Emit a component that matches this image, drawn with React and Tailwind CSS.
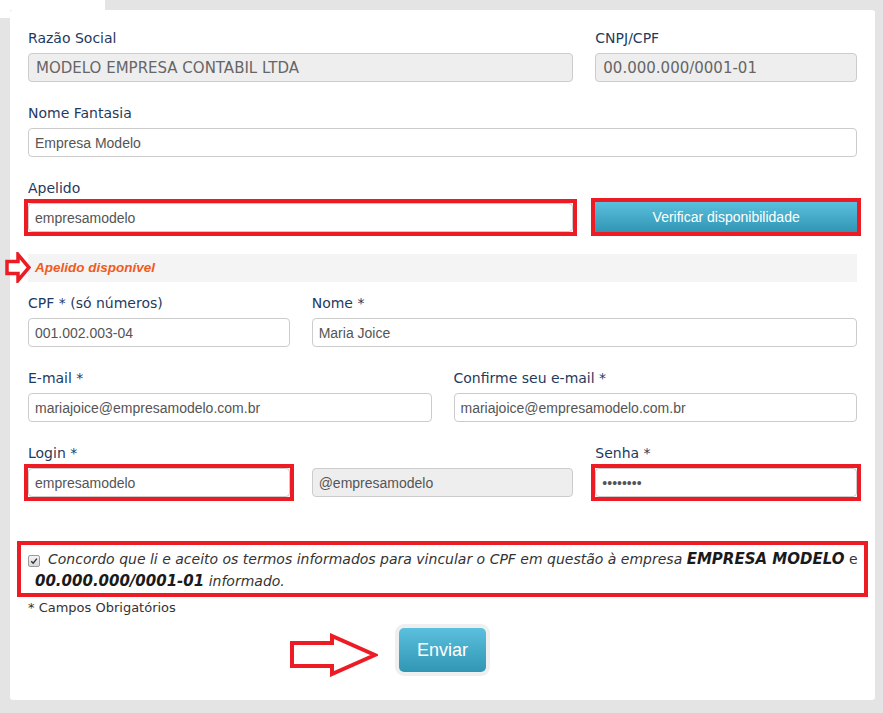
import React from 'react';

const LabelStyle = "block h-[20px] leading-[20px] mb-[5px] text-[14px] text-[#1f3a5f]";
const InputStyle = "block w-full h-[29px] border border-[#cccccc] rounded-[4px] px-[6px] text-[14px] text-[#555555] font-['Liberation_Sans',Arial,sans-serif] bg-white focus:outline-none";
const DisabledStyle = "block w-full h-[29px] border border-[#cccccc] rounded-[4px] px-[7px] text-[15px] text-[#666666] bg-[#eeeeee]";
// red annotation box, square corners
const Highlight = "outline-4 outline-[#ed1c24] outline-offset-0";

const Field = ({ label, value, disabled, highlight, className = '' }) => (
    <div className={className}>
        <label className={LabelStyle}>{label}</label>
        {disabled ? (
            <input readOnly value={value} className={DisabledStyle} />
        ) : (
            <div className={highlight ? Highlight : ''}>
                <input readOnly value={value} className={InputStyle} />
            </div>
        )}
    </div>
);

const HollowArrow = ({ className, viewBox, points, stroke }) => (
    <svg className={className} viewBox={viewBox} fill="white">
        <polygon points={points} stroke="#ed1c24" strokeWidth={stroke} strokeLinejoin="miter" />
    </svg>
);

export default function App() {
    return (
        <div className="min-h-[713px] bg-[#e4e4e4] font-['DejaVu_Sans',Verdana,sans-serif]">
            <div className="flex h-[10px]">
                <div className="w-[105px] bg-white" />
            </div>
            <div className="flex pr-[8px]">
                <div className="w-[10px] shrink-0">
                    <div className="h-[8px] bg-white" />
                </div>
                <div className="flex-1 bg-white rounded-[3px] px-[18px] pt-[18px] pb-[28px]">

                    <div className="grid grid-cols-12 gap-x-[22px]">
                        <Field className="col-span-8" label="Razão Social" value="MODELO EMPRESA CONTABIL LTDA" disabled />
                        <Field className="col-span-4" label="CNPJ/CPF" value="00.000.000/0001-01" disabled />
                    </div>

                    <div className="grid grid-cols-12 gap-x-[22px] mt-[21px]">
                        <Field className="col-span-12" label="Nome Fantasia" value="Empresa Modelo" />
                    </div>

                    <div className="grid grid-cols-12 gap-x-[22px] mt-[21px]">
                        <Field className="col-span-8" label="Apelido" value="empresamodelo" highlight />
                        <div className="col-span-4 pt-[24px]">
                            <div className={Highlight}>
                                <button
                                    type="button"
                                    className="block w-full h-[30px] bg-linear-to-b from-[#5bc0de] to-[#2f96b4] text-white text-[14px] font-['Liberation_Sans',Arial,sans-serif]"
                                >
                                    Verificar disponibilidade
                                </button>
                            </div>
                        </div>
                    </div>

                    <div className="relative mt-[22px] h-[28px] bg-[#f4f4f4] pl-[7px] flex items-center">
                        <HollowArrow
                            className="absolute left-[-23px] top-[-2px] w-[26px] h-[31px]"
                            viewBox="0 0 26 31"
                            points="2,9.5 13,9.5 13,2.5 24,15.5 13,28.5 13,21.5 2,21.5"
                            stroke={3.5}
                        />
                        <span className="text-[13.5px] font-bold italic text-[#f15a22] font-['Liberation_Sans',Arial,sans-serif]">
                            Apelido disponível
                        </span>
                    </div>

                    <div className="grid grid-cols-12 gap-x-[22px] mt-[11px]">
                        <Field className="col-span-4" label="CPF * (só números)" value="001.002.003-04" />
                        <Field className="col-span-8" label="Nome *" value="Maria Joice" />
                    </div>

                    <div className="grid grid-cols-12 gap-x-[22px] mt-[21px]">
                        <Field className="col-span-6" label="E-mail *" value="mariajoice@empresamodelo.com.br" />
                        <Field className="col-span-6" label="Confirme seu e-mail *" value="mariajoice@empresamodelo.com.br" />
                    </div>

                    <div className="grid grid-cols-12 gap-x-[22px] mt-[21px]">
                        <Field className="col-span-4" label="Login *" value="empresamodelo" highlight />
                        <div className="col-span-4 pt-[25px]">
                            <input readOnly value="@empresamodelo" className={`${InputStyle} bg-[#eeeeee]!`} />
                        </div>
                        <Field className="col-span-4" label="Senha *" value="••••••••" highlight />
                    </div>

                    <div className="mt-[44px] -mx-[11px] border-4 border-[#ed1c24] pl-[14px] pt-[3px] pb-[1px] text-[14px] leading-[22px] italic text-[#333333]">
                        <div className="whitespace-nowrap">
                            <span className="inline-flex items-center justify-center w-[12px] h-[12px] ml-[-7px] mr-[8px] align-[-1px] rounded-[2px] border border-[#9a9a9a] bg-linear-to-b from-[#f4f4f4] to-[#d8d8d8]">
                                <svg viewBox="0 0 10 10" className="w-[8px] h-[8px]">
                                    <path d="M1.5 5.2 L4 7.8 L8.6 2" fill="none" stroke="#333" strokeWidth="1.8" />
                                </svg>
                            </span>
                            Concordo que li e aceito os termos informados para vincular o CPF em questão à empresa{' '}
                            <b className="text-[15px] text-[#1a1a1a]">EMPRESA MODELO</b> <span className="not-italic">e</span>
                        </div>
                        <div className="whitespace-nowrap">
                            <b className="text-[15px] text-[#1a1a1a]">00.000.000/0001-01</b> informado.
                        </div>
                    </div>

                    <p className="mt-[1px] h-[20px] leading-[20px] text-[13px] text-[#333333]">* Campos Obrigatórios</p>

                    <div className="mt-[10px] flex justify-center">
                        <div className="relative">
                            <HollowArrow
                                className="absolute right-full mr-[21px] top-[5px] w-[88px] h-[44px]"
                                viewBox="0 0 88 44"
                                points="2,10 42,10 42,3 85,22 42,41 42,33 2,33"
                                stroke={4}
                            />
                            <button
                                type="button"
                                className="w-[87px] h-[44px] rounded-[5px] bg-linear-to-b from-[#5bc0de] to-[#2f96b4] text-white text-[18px] font-['Liberation_Sans',Arial,sans-serif] shadow-[0_0_0_4px_#efefef]"
                            >
                                Enviar
                            </button>
                        </div>
                    </div>
                </div>
            </div>
        </div>
    );
}
